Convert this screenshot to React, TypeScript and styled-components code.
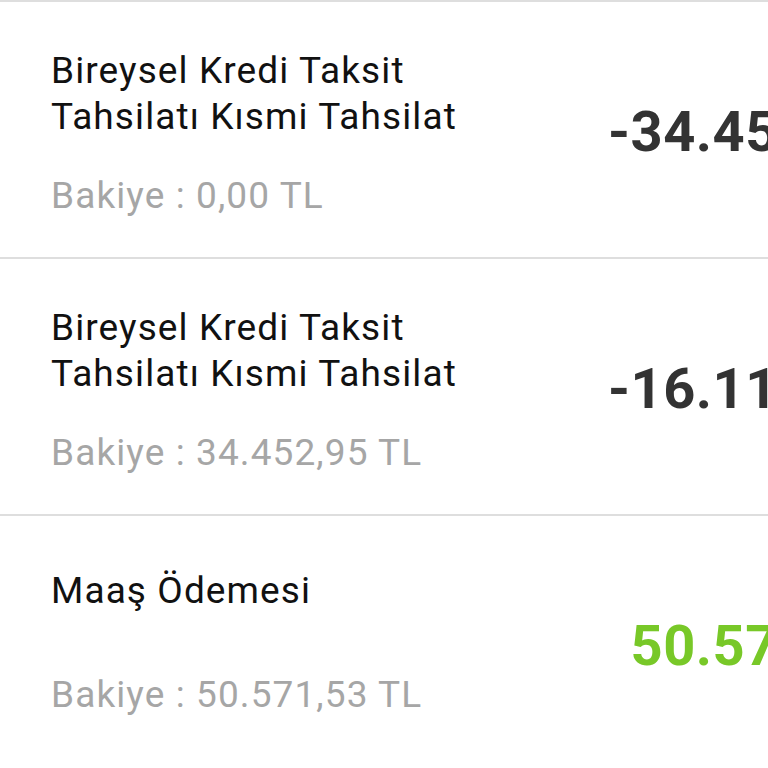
import React from 'react';
import styled, { createGlobalStyle } from 'styled-components';

const GlobalStyle = createGlobalStyle`
  html, body {
    margin: 0;
    padding: 0;
    background: #ffffff;
    overflow: hidden;
  }
  body {
    font-family: Roboto, "Noto Sans", "Liberation Sans", sans-serif;
  }
`;

const List = styled.ul`
  list-style: none;
  margin: 0;
  padding: 0;
  width: 1000px;
  border-top: 2px solid #dedede;
`;

const Row = styled.li`
  display: grid;
  grid-template-columns: 1fr auto;
  height: 255px;
  padding: 0 31px 0 51px;
  border-bottom: 2px solid #dedede;
`;

const Info = styled.div<{ $top: number }>`
  align-self: start;
  display: flex;
  flex-direction: column;
  padding-top: ${(p) => p.$top}px;
`;

const Title = styled.div<{ $gap: number }>`
  font-size: 37px;
  line-height: 46px;
  letter-spacing: 1.1px;
  color: #111111;
  margin-bottom: ${(p) => p.$gap}px;
`;

const Balance = styled.div`
  font-size: 37px;
  line-height: 46px;
  letter-spacing: 1.1px;
  color: #a6a6a6;
`;

const Amount = styled.div<{ $income?: boolean }>`
  align-self: center;
  text-align: right;
  white-space: nowrap;
  font-size: 56px;
  font-weight: 700;
  letter-spacing: 0.5px;
  color: ${(p) => (p.$income ? '#78c828' : '#333333')};
  padding-top: 5px;
`;

type Tx = {
  title: string[];
  balance: string;
  amount: string;
  income?: boolean;
};

const items: Tx[] = [
  {
    title: ['Bireysel Kredi Taksit', 'Tahsilatı Kısmi Tahsilat'],
    balance: 'Bakiye : 0,00 TL',
    amount: '-34.452,95 TL',
  },
  {
    title: ['Bireysel Kredi Taksit', 'Tahsilatı Kısmi Tahsilat'],
    balance: 'Bakiye : 34.452,95 TL',
    amount: '-16.118,58 TL',
  },
  {
    title: ['Maaş Ödemesi'],
    balance: 'Bakiye : 50.571,53 TL',
    amount: '50.571,53 TL',
    income: true,
  },
];

const App = () => {
  return (
    <>
      <GlobalStyle />
      <List>
        {items.map((tx, i) => {
          const single = tx.title.length === 1;
          return (
            <Row key={i}>
              <Info $top={single ? 52 : 46}>
                <Title $gap={single ? 58 : 33}>
                  {tx.title.map((line) => (
                    <div key={line}>{line}</div>
                  ))}
                </Title>
                <Balance>{tx.balance}</Balance>
              </Info>
              <Amount $income={tx.income}>{tx.amount}</Amount>
            </Row>
          );
        })}
      </List>
    </>
  );
};

export default App;
